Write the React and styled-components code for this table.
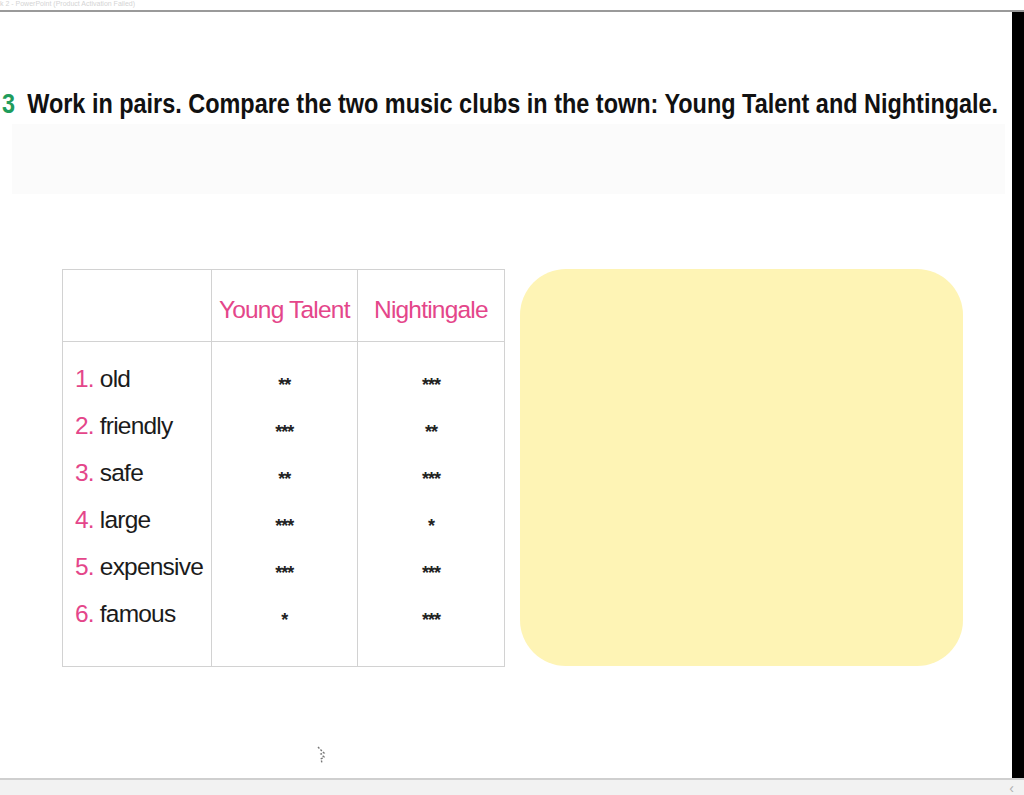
import React from "react";
import styled, { createGlobalStyle } from "styled-components";

const Global = createGlobalStyle`
  html, body { margin: 0; padding: 0; background: #fff; }
  body { width: 1024px; height: 795px; overflow: hidden; font-family: "Liberation Sans", Arial, sans-serif; }
`;

const Page = styled.div`
  display: flex;
  flex-direction: column;
  width: 1024px;
  height: 795px;
  overflow: hidden;
`;

const TopBar = styled.div`
  height: 10px;
  border-bottom: 2px solid #9a9a9a;
  overflow: hidden;
  font-size: 7px;
  line-height: 7px;
  color: #d4d4d4;
  white-space: nowrap;
`;

const Middle = styled.div`
  flex: 1;
  display: flex;
  min-height: 0;
`;

const Slide = styled.div`
  flex: 1;
  min-width: 0;
  overflow: hidden;
  position: relative;
  display: flex;
  flex-direction: column;
  background: #fff;
`;

const BlackBar = styled.div`
  width: 12px;
  flex-shrink: 0;
  background: #000;
`;

const BottomBar = styled.div`
  height: 15px;
  border-top: 2px solid #cfcfcf;
  background: #f2f2f2;
  display: flex;
  justify-content: flex-end;
  align-items: center;
  padding-right: 10px;
  color: #b0b0b0;
  font-size: 14px;
`;

const Heading = styled.h1`
  margin: 76px 0 0 2px;
  font-size: 27px;
  font-weight: bold;
  color: #111;
  white-space: nowrap;
  display: flex;
  gap: 14px;
  line-height: 32px;
  min-width: 0;
  transform: scaleX(0.868);
  transform-origin: left center;
`;

const Num = styled.span`
  color: #1f9c5c;
`;

const Band = styled.div`
  margin: 4px 7px 0 12px;
  height: 70px;
  background: #fbfbfb;
`;

const Content = styled.div`
  margin: 75px 0 0 62px;
  display: flex;
  gap: 15px;
  align-items: flex-start;
`;

const Table = styled.table`
  border-collapse: collapse;
  width: 443px;
  border: 1.5px solid #d2d2d2;
  font-size: 24.5px;
  letter-spacing: -0.8px;
`;

const Th = styled.th`
  height: 63px;
  border-left: 1.5px solid #d2d2d2;
  border-bottom: 1.5px solid #d2d2d2;
  font-weight: normal;
  color: #e4468a;
  padding: 8px 0 0;
  width: ${(p) => p.$w}px;
  &:first-child { border-left: none; }
`;

const Td = styled.td`
  border-left: 1.5px solid #d2d2d2;
  padding: ${(p) => (p.$first ? "13px" : "0")} 0 ${(p) => (p.$last ? "29px" : "0")};
  &:first-child { border-left: none; }
`;

const Cell = styled.div`
  height: 47px;
  line-height: 47px;
  text-align: ${(p) => (p.$center ? "center" : "left")};
  padding-left: ${(p) => (p.$center ? "0" : "12px")};
  color: #1b1b1b;
  white-space: nowrap;
`;

const Index = styled.span`
  color: #e4468a;
  margin-right: 6px;
`;

const Stars = styled.span`
  font-size: 18px;
  font-weight: bold;
  letter-spacing: -1px;
  color: #222;
  position: relative;
  top: 4px;
`;

const YellowBox = styled.div`
  width: 443px;
  height: 397px;
  border-radius: 46px;
  background: #fef4b5;
`;

const Cursor = styled.svg`
  position: absolute;
  left: 315px;
  top: 733px;
`;

const rows = [
  ["old", "**", "***"],
  ["friendly", "***", "**"],
  ["safe", "**", "***"],
  ["large", "***", "*"],
  ["expensive", "***", "***"],
  ["famous", "*", "***"],
];

export default function App() {
  return (
    <Page>
      <Global />
      <TopBar>k 2 - PowerPoint (Product Activation Failed)</TopBar>
      <Middle>
        <Slide>
          <Heading>
            <Num>3</Num>
            <span>Work in pairs. Compare the two music clubs in the town: Young Talent and Nightingale.</span>
          </Heading>
          <Band />
          <Content>
            <Table>
              <thead>
                <tr>
                  <Th $w={148}></Th>
                  <Th $w={147}>Young Talent</Th>
                  <Th $w={147}>Nightingale</Th>
                </tr>
              </thead>
              <tbody>
                {rows.map((r, i) => {
                  const first = i === 0;
                  const last = i === rows.length - 1;
                  return (
                    <tr key={r[0]}>
                      <Td $first={first} $last={last}>
                        <Cell>
                          <Index>{i + 1}.</Index>
                          {r[0]}
                        </Cell>
                      </Td>
                      <Td $first={first} $last={last}>
                        <Cell $center>
                          <Stars>{r[1]}</Stars>
                        </Cell>
                      </Td>
                      <Td $first={first} $last={last}>
                        <Cell $center>
                          <Stars>{r[2]}</Stars>
                        </Cell>
                      </Td>
                    </tr>
                  );
                })}
              </tbody>
            </Table>
            <YellowBox />
          </Content>
          <Cursor width="14" height="22" viewBox="0 0 14 22">
            <path d="M3 2 L9 8 L6 9 L9 12 L6 14 L7 18" fill="none" stroke="#777" strokeWidth="1.4" strokeDasharray="2 1.5" />
          </Cursor>
        </Slide>
        <BlackBar />
      </Middle>
      <BottomBar>‹</BottomBar>
    </Page>
  );
}
